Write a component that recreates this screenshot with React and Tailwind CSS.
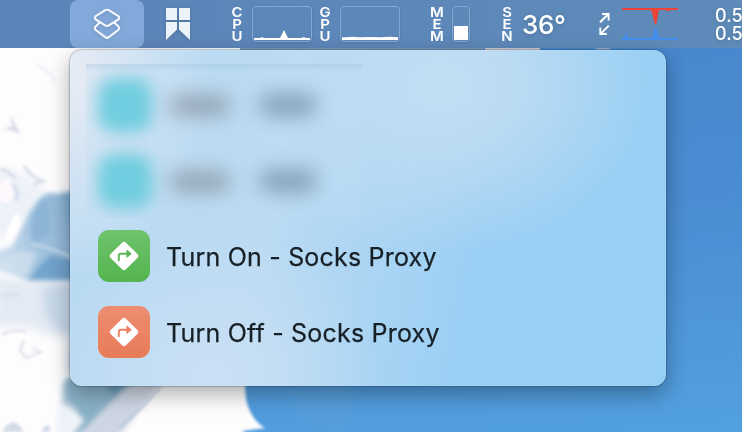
import React from "react";

function Wallpaper() {
  return (
    <svg className="absolute inset-0" width="742" height="432" viewBox="0 0 742 432" aria-hidden="true">
      <defs>
        <linearGradient id="sky" x1="0.6" y1="0" x2="0.75" y2="1">
          <stop offset="0" stopColor="#4785cb" />
          <stop offset="0.5" stopColor="#4a8dd2" />
          <stop offset="1" stopColor="#529fde" />
        </linearGradient>
        <linearGradient id="petal" x1="0" y1="0.6" x2="1" y2="0.4">
          <stop offset="0" stopColor="#cfdfee" />
          <stop offset="0.45" stopColor="#a5c5e0" />
          <stop offset="1" stopColor="#84aed2" />
        </linearGradient>
        <filter id="soft1" x="-20%" y="-20%" width="140%" height="140%"><feGaussianBlur stdDeviation="1.5" /></filter>
        <filter id="soft3" x="-20%" y="-20%" width="140%" height="140%"><feGaussianBlur stdDeviation="2.8" /></filter>
        <filter id="soft5" x="-30%" y="-30%" width="160%" height="160%"><feGaussianBlur stdDeviation="5" /></filter>
      </defs>
      <rect width="742" height="432" fill="url(#sky)" />
      <path d="M-10 0H300V370H247Q242 398 251 413Q256 423 265 428L243 431L246 445H-10Z" fill="#fefdfe" filter="url(#soft1)" />
      <rect x="240" y="46" width="244" height="4" fill="#7d99ba" />
      <rect x="485" y="46" width="55" height="6" fill="#d3cfd1" />
      <rect x="596" y="46" width="14" height="4" fill="#aab8cc" filter="url(#soft1)" />
      <g filter="url(#soft5)">
        <path d="M-5 276Q30 286 85 279L85 338Q55 340 35 330Q15 322 -5 328Z" fill="#e3eaf3" />
        <path d="M42 285L85 282V338Q58 335 46 318Z" fill="#c6d8e8" />
        <path d="M-5 170Q25 168 45 190L28 215L-5 245Z" fill="#edf1f8" />
        <path d="M70 335L90 350V380L68 372Z" fill="#b9cddd" />
      </g>
      <g filter="url(#soft3)">
        <path d="M36 203Q45 190 55 194L84 190V281H28Q14 274 -6 270V252L12 246Q22 228 28 214Z" fill="url(#petal)" />
        <path d="M44 195Q52 215 48 238L32 242Q28 225 35 210Z" fill="#82aed3" opacity=".65" />
        <path d="M62 192Q64 220 78 246V190Z" fill="#79a6cd" opacity=".5" />
        <path d="M28 280Q37 266 50 255L80 262V280Z" fill="#6399c5" opacity=".75" />
        <path d="M-4 262Q20 246 36 254Q30 266 26 276Q12 270 -4 272Z" fill="#d0e0ee" opacity=".8" />
        <path d="M65 380L80 374V440H64Q60 410 62 385Z" fill="#b3cada" />
        <path d="M66 378H146L110 405Q93 425 74 436L80 412L66 398Z" fill="#8ab2c8" />
        <path d="M104 380H136L112 396Z" fill="#6b9cba" />
        <path d="M58 402L70 408L84 420L70 438H56Z" fill="#eff3f9" />
        <path d="M134 380H163Q143 408 117 438H76Q98 415 134 380Z" fill="#ced6e4" />
      </g>
      <g filter="url(#soft1)">
        <path d="M30 244Q54 248 78 260" stroke="#bfd6e9" strokeWidth="2.5" fill="none" />
        <path d="M8 230Q13 214 18 213Q22 222 17 232Q8 242 4 244Z" fill="#fff" />
        <ellipse cx="6" cy="191" rx="8" ry="12" fill="#fdf9fd" />
      </g>
      <g filter="url(#soft1)" opacity=".75">
        <path d="M10 115L21 134L9 130L0 131L12 126Z" fill="#d0d2e3" />
        <path d="M38 65Q47 70 56 81" stroke="#efeaf3" strokeWidth="3" fill="none" />
        <path d="M0 169Q8 170 15 178M12 184Q20 192 16 200M24 166Q32 178 43 181L34 184" stroke="#c8d2e3" strokeWidth="3" fill="none" />
        <path d="M0 294Q10 298 19 293M2 335Q14 328 26 332M24 340L20 350L26 358L41 352L32 348" stroke="#d6d9e6" strokeWidth="2.4" fill="none" />
        <path d="M2 432Q10 418 18 424L24 432ZM42 432Q44 424 50 426V432Z" fill="#c3cfdf" />
        <path d="M162 386Q142 409 119 428" stroke="#9db1cc" strokeWidth="1.5" fill="none" />
      </g>
      <path d="M288 384Q293 413 316 432H345Q356 413 350 384Z" fill="#62a2d6" opacity=".3" filter="url(#soft5)" />
    </svg>
  );
}

function ShortcutsIcon() {
  return (
    <svg width="28" height="32" viewBox="0 0 28 32" fill="none" stroke="#f4f7fc" strokeWidth="2.1" strokeLinejoin="round" strokeLinecap="round" className="drop-shadow-sm">
      <path d="M12.2 2.2Q14 1.2 15.8 2.2L25.3 8.1Q27.1 9.8 25.3 11.5L15.8 17.4Q14 18.5 12.2 17.4L2.7 11.5Q.9 9.8 2.7 8.1Z" />
      <path d="M6.6 14.5L2.7 18.4Q.9 20.2 2.7 22L12.2 29.2Q14 30.6 15.8 29.2L25.3 22Q27.1 20.2 25.3 18.4L21.4 14.5" />
    </svg>
  );
}

function BookmarkIcon() {
  return (
    <svg width="24" height="32" viewBox="0 0 24 32" fill="#edf3fa" className="ml-[22px] drop-shadow-sm">
      <path d="M0 0H11V12H0ZM13 0H24V12H13ZM0 14H11V21.5L0 32ZM13 14H24V32L13 21.5Z" />
    </svg>
  );
}

function StackedLabel({ text }) {
  return (
    <div className="flex w-3 scale-x-115 flex-col items-center text-[13px] font-semibold leading-[12px] text-white">
      {text.split("").map((c, i) => <span key={i}>{c}</span>)}
    </div>
  );
}

function Graph({ children }) {
  return (
    <div className="h-9 w-[60px] rounded-[4px] border border-[#86a8d0] shadow-sm">
      <svg width="56" height="33" viewBox="0 0 56 33" fill="white" className="ml-px">{children}</svg>
    </div>
  );
}

function MenuBar() {
  return (
    <header className="relative flex h-12 w-[742px] items-center overflow-hidden bg-linear-to-r from-[#5b84b9] to-[#5e8bb9] font-['Inter',sans-serif] *:shrink-0">
      <div className="ml-[70px] flex h-12 w-[74px] items-center justify-center rounded-lg bg-[#82a9da]">
        <ShortcutsIcon />
      </div>
      <BookmarkIcon />
      <div className="ml-[41px]"><StackedLabel text="CPU" /></div>
      <div className="ml-[9px]">
        <Graph><path d="M0 31H6L8 30L10 31H26L30 23L34 31H47L50 30L52 31H56V33H0Z" /></Graph>
      </div>
      <div className="ml-[7px]"><StackedLabel text="GPU" /></div>
      <div className="ml-[9px]">
        <Graph><path d="M0 30.3H4L10 29.8L18 30.3L28 30L38 30.3L48 29.7L56 30.3V33H0Z" /></Graph>
      </div>
      <div className="ml-[31px]"><StackedLabel text="MEM" /></div>
      <div className="ml-[9px] flex h-9 w-[18px] items-end rounded-[4px] border border-[#86a8d0] p-px shadow-sm">
        <div className="h-[14px] w-full bg-white" />
      </div>
      <div className="ml-[31px]"><StackedLabel text="SEN" /></div>
      <div className="ml-[9px] mt-[2px] w-[44px] whitespace-nowrap text-[26px] font-medium leading-[30px] tracking-[-0.4px] text-white drop-shadow-sm">36°</div>
      <svg width="12" height="24" viewBox="0 0 12 24" fill="none" stroke="white" strokeWidth="1.9" className="ml-[33px]">
        <path d="M1 10.2L9.2 2.2M3 2H9.6V8.5M9.8 13.6L1.6 21.8M1.3 15.5V22H7.8" />
      </svg>
      <svg width="56" height="32" viewBox="0 0 56 32" className="ml-[11px]">
        <path d="M0 0H56V2H49L46 3.2L43 2H37L34.5 15Q33.5 17.5 32.5 15L30 4L28.5 2H0Z" fill="#ec4436" />
        <path d="M0 30H2L4 24L6 30H30L32.5 20.5Q33.5 18 34.5 20.5L37 30H56V32H0Z" fill="#458eed" />
      </svg>
      <div className="ml-[37px] mt-px whitespace-nowrap text-[18px] font-medium leading-[18px] text-white drop-shadow-sm">
        <div>0.5</div>
        <div>0.5</div>
      </div>
    </header>
  );
}

function BlurredRow() {
  return (
    <div className="flex h-[76px] items-center pl-3">
      <div className="h-[54px] w-[54px] rounded-2xl bg-[#70cddf] blur-[8px]" />
      <div className="ml-[18px] mt-px h-[21px] w-[60px] rounded-lg bg-[#84909c]/75 blur-[10px]" />
      <div className="ml-[30px] h-[22px] w-[56px] rounded-lg bg-[#6f8ba2]/75 blur-[10px]" />
    </div>
  );
}

function ShortcutRow({ label, tile, arrow }) {
  return (
    <div className="flex h-[76px] items-center pl-7">
      <div className={`flex h-[52px] w-[52px] items-center justify-center rounded-[11px] ${tile}`}>
        <svg width="32" height="32" viewBox="0 0 32 32" fill="none">
          <rect x="5.2" y="5.2" width="21.6" height="21.6" rx="2.7" fill="white" transform="rotate(45 16 16)" />
          <path d="M10.8 20.3V15.8Q10.8 13.7 12.9 13.7H19" stroke={arrow} strokeWidth="1.9" strokeLinecap="round" />
          <path d="M18.4 10.5Q18.4 9.3 19.4 10L23 13Q23.7 13.7 23 14.4L19.4 17.4Q18.4 18 18.4 16.9Z" fill={arrow} />
        </svg>
      </div>
      <span className="ml-4 mt-[2px] whitespace-nowrap text-[25px] leading-8 tracking-[0.2px] text-[#172027] [-webkit-text-stroke:0.25px_#172027]">{label}</span>
    </div>
  );
}

export default function App() {
  return (
    <div className="relative h-[432px] w-[742px] overflow-hidden font-['Inter',sans-serif]">
      <Wallpaper />
      <MenuBar />
      <main className="relative ml-[70px] mt-[2px] h-[336px] w-[596px] rounded-xl bg-[radial-gradient(ellipse_150px_210px_at_-10px_20px,#ebedf4_0%,#ebedf400_100%),radial-gradient(ellipse_210px_170px_at_375px_35px,#c2def3_0%,#c2def3cc_35%,#c2def300_100%),radial-gradient(ellipse_170px_150px_at_140px_330px,#cbe0f4_0%,#cbe0f400_100%),linear-gradient(100deg,#b8d9f2_0%,#bbdbf3_35%,#9bcff4_68%,#98d0f4_100%)] pt-[14px] shadow-[0_0_2px_rgba(20,45,75,0.85),0_8px_22px_rgba(0,0,0,0.32),inset_0_0_1px_rgba(255,255,255,0.65)]">
        <div className="ml-4 h-[154px] w-[276px] overflow-hidden bg-linear-to-b from-[#91b7d6]/30 via-[#c5def3]/20 via-5% to-[#c3dff3]/20 pt-[3px]">
          <BlurredRow />
          <BlurredRow />
        </div>
        <ShortcutRow label="Turn On - Socks Proxy" tile="bg-linear-to-b from-[#6ec36c] to-[#55b54f]" arrow="#5bb957" />
        <ShortcutRow label="Turn Off - Socks Proxy" tile="bg-linear-to-b from-[#ed8d70] to-[#e87b58]" arrow="#eb8262" />
      </main>
    </div>
  );
}
